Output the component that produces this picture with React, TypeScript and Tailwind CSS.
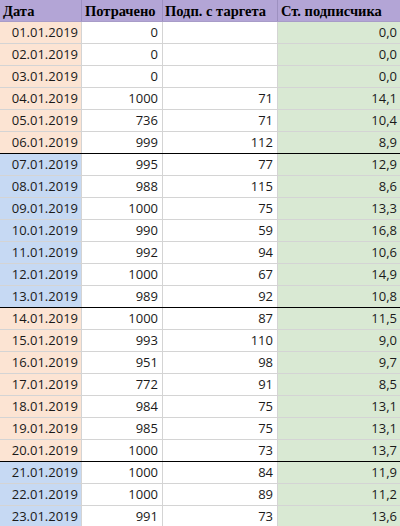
import React from "react";

type Row = { d: string; s: string; p: string; c: string; bg: "o" | "b"; sep?: boolean };

const rows: Row[] = [
  { d: "01.01.2019", s: "0", p: "", c: "0,0", bg: "o" },
  { d: "02.01.2019", s: "0", p: "", c: "0,0", bg: "o" },
  { d: "03.01.2019", s: "0", p: "", c: "0,0", bg: "o" },
  { d: "04.01.2019", s: "1000", p: "71", c: "14,1", bg: "o" },
  { d: "05.01.2019", s: "736", p: "71", c: "10,4", bg: "o" },
  { d: "06.01.2019", s: "999", p: "112", c: "8,9", bg: "o", sep: true },
  { d: "07.01.2019", s: "995", p: "77", c: "12,9", bg: "b" },
  { d: "08.01.2019", s: "988", p: "115", c: "8,6", bg: "b" },
  { d: "09.01.2019", s: "1000", p: "75", c: "13,3", bg: "b" },
  { d: "10.01.2019", s: "990", p: "59", c: "16,8", bg: "b" },
  { d: "11.01.2019", s: "992", p: "94", c: "10,6", bg: "b" },
  { d: "12.01.2019", s: "1000", p: "67", c: "14,9", bg: "b" },
  { d: "13.01.2019", s: "989", p: "92", c: "10,8", bg: "b", sep: true },
  { d: "14.01.2019", s: "1000", p: "87", c: "11,5", bg: "o" },
  { d: "15.01.2019", s: "993", p: "110", c: "9,0", bg: "o" },
  { d: "16.01.2019", s: "951", p: "98", c: "9,7", bg: "o" },
  { d: "17.01.2019", s: "772", p: "91", c: "8,5", bg: "o" },
  { d: "18.01.2019", s: "984", p: "75", c: "13,1", bg: "o" },
  { d: "19.01.2019", s: "985", p: "75", c: "13,1", bg: "o" },
  { d: "20.01.2019", s: "1000", p: "73", c: "13,7", bg: "o", sep: true },
  { d: "21.01.2019", s: "1000", p: "84", c: "11,9", bg: "b" },
  { d: "22.01.2019", s: "1000", p: "89", c: "11,2", bg: "b" },
  { d: "23.01.2019", s: "991", p: "73", c: "13,6", bg: "b" },
];

const body = { fontFamily: '"Open Sans", "Liberation Sans", sans-serif' };
const head = { fontFamily: '"Liberation Serif", serif' };

export default function App() {
  return (
    <div className="w-[400px] h-[526px] overflow-hidden bg-white text-[#1a1a1a]">
      <div
        className="flex h-[22px] bg-[#b3a5d6] border-b border-[#a89cc8] text-[14.5px] font-bold text-black leading-none"
        style={head}
      >
        <div className="w-[82px] border-r border-[#9d90c0] pl-[3px] pt-[2px] flex items-center">Дата</div>
        <div className="w-[81px] border-r border-[#9d90c0] pl-[3px] pt-[2px] flex items-center">Потрачено</div>
        <div className="w-[115px] border-r border-[#9d90c0] pl-[2px] pt-[2px] flex items-center whitespace-nowrap">Подп. с таргета</div>
        <div className="flex-1 pl-[3px] pt-[2px] flex items-center whitespace-nowrap">Ст. подписчика</div>
      </div>
      {rows.map((r) => (
        <div
          key={r.d}
          className={`flex h-[22px] border-b text-[13px] leading-none ${r.sep ? "border-black" : "border-[#d4d4d4]"}`}
          style={body}
        >
          <div
            className={`w-[82px] border-r border-[#d4d4d4] pr-[3px] flex items-center justify-end ${r.bg === "o" ? "bg-[#fce4d3]" : "bg-[#c6d9f3]"}`}
          >
            {r.d}
          </div>
          <div className="w-[81px] border-r border-[#d4d4d4] pr-[4px] flex items-center justify-end">{r.s}</div>
          <div className="w-[115px] border-r border-[#d4d4d4] pr-[4px] flex items-center justify-end">{r.p}</div>
          <div className="flex-1 bg-[#d9e9d3] pr-[3px] flex items-center justify-end">{r.c}</div>
        </div>
      ))}
    </div>
  );
}
